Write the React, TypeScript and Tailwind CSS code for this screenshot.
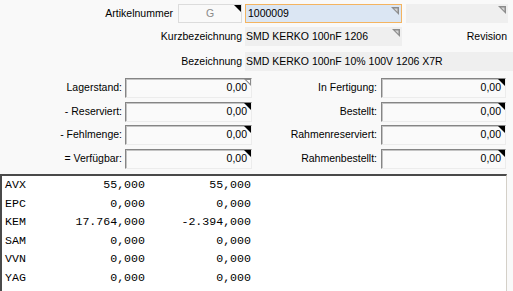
const Corner = ({ kind }: { kind: "black" | "gray" | "outline" }) => {
  if (kind === "black") {
    return (
      <svg className="absolute right-0 top-0" width="8" height="8" viewBox="0 0 8 8">
        <polygon points="1,0 8,0 8,7" fill="#000" />
      </svg>
    );
  }
  if (kind === "outline") {
    return (
      <svg className="absolute right-0 top-0" width="8" height="8" viewBox="0 0 8 8">
        <polygon points="1,0 8,0 8,7" fill="#8a8a8a" />
        <polygon points="3.5,1 7,1 7,4.5" fill="#fff" />
      </svg>
    );
  }
  return (
    <svg className="absolute right-[2px] top-[2px]" width="8" height="8" viewBox="0 0 8 8">
      <polygon points="0,0 8,0 8,8" fill="#8c8c8c" />
      <polygon points="3,1.5 6.5,1.5 6.5,5" fill="#d6d6d6" />
    </svg>
  );
};

const NumField = ({ value, corner = "black" }: { value: string; corner?: "black" | "outline" }) => (
  <div className="relative flex h-[20px] items-center justify-end border-t border-l border-[#858585] border-b border-r border-b-[#ececec] border-r-[#ececec] bg-[#fafafa] pr-[4px] shadow-[inset_1px_1px_0_#c4c4c4]">
    {value}
    <Corner kind={corner} />
  </div>
);

const stockLeft = [
  { label: "Lagerstand:", corner: "outline" as const },
  { label: "- Reserviert:", corner: "black" as const },
  { label: "- Fehlmenge:", corner: "black" as const },
  { label: "= Verfügbar:", corner: "black" as const },
];

const stockRight = ["In Fertigung:", "Bestellt:", "Rahmenreserviert:", "Rahmenbestellt:"];

const rows = [
  ["AVX", "55,000", "55,000"],
  ["EPC", "0,000", "0,000"],
  ["KEM", "17.764,000", "-2.394,000"],
  ["SAM", "0,000", "0,000"],
  ["VVN", "0,000", "0,000"],
  ["YAG", "0,000", "0,000"],
];

export default function App() {
  return (
    <div className="h-[291px] w-[513px] overflow-hidden bg-[#f9f9f9] text-[10.5px] text-black" style={{ fontFamily: '"Liberation Sans", Arial, sans-serif' }}>
      {/* header */}
      <div className="flex h-[19px] mt-[4px] items-center">
        <div className="w-[178px] pr-[5px] text-right">Artikelnummer</div>
        <div className="relative flex h-[19px] w-[64px] items-center justify-center border border-[#dcdcdc] bg-[#f9f9f9] text-[#8a8a8a]">
          G
          <Corner kind="black" />
        </div>
        <div className="relative ml-[3px] flex h-[19px] w-[157px] items-center border border-[#f4b460] bg-[#dbe6f3] pl-[2px]">
          1000009
          <Corner kind="gray" />
        </div>
        <div className="relative ml-[4px] h-[19px] w-[102px] bg-[#efefef]">
          <Corner kind="gray" />
        </div>
      </div>

      <div className="flex h-[19px] mt-[4px] items-center">
        <div className="w-[245px] pr-[3px] text-right">Kurzbezeichnung</div>
        <div className="relative flex h-[19px] w-[157px] items-center bg-[#efefef] pl-[1px]">
          SMD KERKO 100nF 1206
          <Corner kind="gray" />
        </div>
        <div className="flex-1 pr-[6px] text-right">Revision</div>
      </div>

      <div className="flex h-[19px] mt-[6px] items-center">
        <div className="w-[245px] pr-[3px] text-right">Bezeichnung</div>
        <div className="flex h-[19px] flex-1 items-center bg-[#efefef] pl-[1px]">SMD KERKO 100nF 10% 100V 1206 X7R</div>
      </div>

      {/* stock figures */}
      <div className="mt-[7px] flex flex-col gap-y-[3.5px]">
        {stockLeft.map((l, i) => (
          <div key={l.label} className="flex items-center">
            <div className="w-[125px] pr-[3px] text-right">{l.label}</div>
            <div className="w-[127px]">
              <NumField value="0,00" corner={l.corner} />
            </div>
            <div className="w-[129px] pr-[4px] text-right">{stockRight[i]}</div>
            <div className="w-[125px]">
              <NumField value="0,00" />
            </div>
          </div>
        ))}
      </div>

      {/* supplier table */}
      <div className="mt-[5px] h-[130px] w-[507px] border-t-2 border-l-2 border-[#4a4a4a] border-r border-r-[#d4d0c8] bg-white pl-[3px] text-[11.6px]" style={{ fontFamily: '"Liberation Mono", "Courier New", monospace' }}>
        {rows.map((r) => (
          <div key={r[0]} className="flex h-[18.6px] items-center">
            <div className="w-[60px]">{r[0]}</div>
            <div className="w-[80px] text-right">{r[1]}</div>
            <div className="w-[106px] text-right">{r[2]}</div>
          </div>
        ))}
      </div>
    </div>
  );
}
